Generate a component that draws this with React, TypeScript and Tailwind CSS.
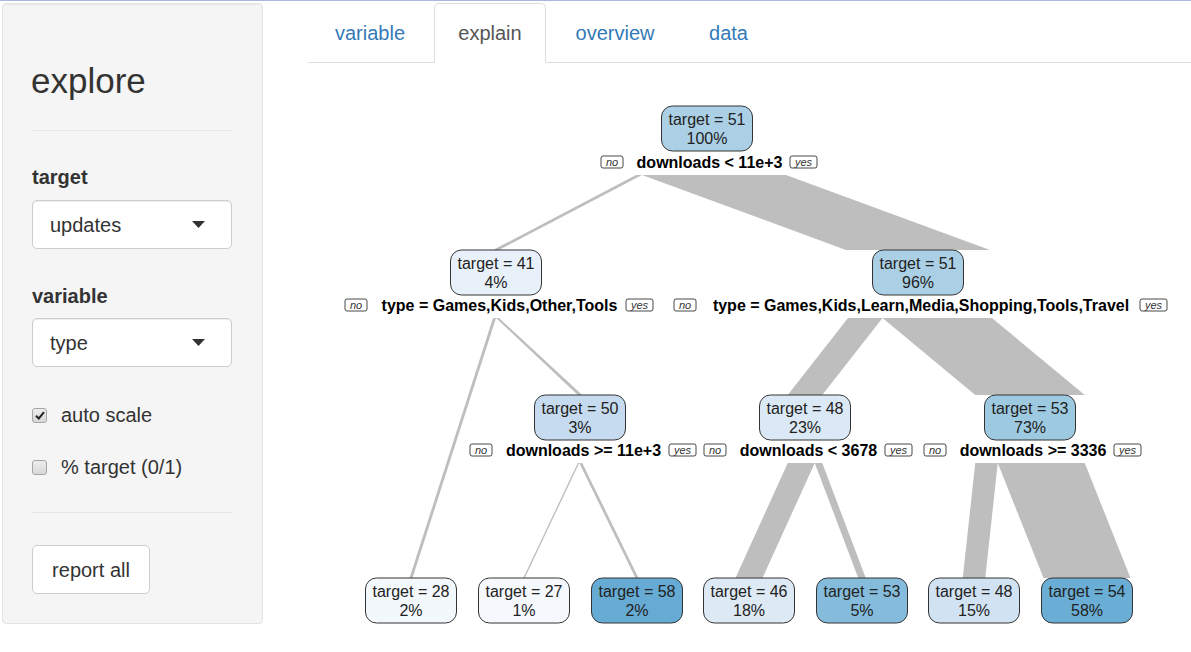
import React from 'react';

type Node = { cx: number; y: number; target: number; pct: string; fill: string };
type Split = { cx: number; hw: number; y: number; label: string };

const nodes: Node[] = [
  { cx: 707, y: 106, target: 51, pct: '100%', fill: '#abd0e6' },
  { cx: 496, y: 250, target: 41, pct: '4%', fill: '#e8f1fa' },
  { cx: 918, y: 250, target: 51, pct: '96%', fill: '#abd0e6' },
  { cx: 580, y: 395, target: 50, pct: '3%', fill: '#c6dbef' },
  { cx: 805, y: 395, target: 48, pct: '23%', fill: '#dbe9f6' },
  { cx: 1030, y: 395, target: 53, pct: '73%', fill: '#9ecae1' },
  { cx: 411, y: 578, target: 28, pct: '2%', fill: '#f3f8fd' },
  { cx: 524, y: 578, target: 27, pct: '1%', fill: '#f5f9fe' },
  { cx: 637, y: 578, target: 58, pct: '2%', fill: '#66abd4' },
  { cx: 749, y: 578, target: 46, pct: '18%', fill: '#dde9f5' },
  { cx: 862, y: 578, target: 53, pct: '5%', fill: '#85bcdc' },
  { cx: 974, y: 578, target: 48, pct: '15%', fill: '#d1e3f3' },
  { cx: 1087, y: 578, target: 54, pct: '58%', fill: '#6aaed6' },
];

const splits: Split[] = [
  { cx: 709.5, hw: 73.5, y: 162, label: 'downloads < 11e+3' },
  { cx: 499.5, hw: 119.5, y: 305, label: 'type = Games,Kids,Other,Tools' },
  { cx: 921, hw: 212, y: 305, label: 'type = Games,Kids,Learn,Media,Shopping,Tools,Travel' },
  { cx: 583.5, hw: 78.5, y: 450, label: 'downloads >= 11e+3' },
  { cx: 808.5, hw: 69.5, y: 450, label: 'downloads < 3678' },
  { cx: 1033, hw: 74, y: 450, label: 'downloads >= 3336' },
];

// [topLeft, topRight, y1, bottomLeft, bottomRight, y2]
const branches: number[][] = [
  [636, 642, 175, 493, 499, 250],
  [642, 786, 175, 846, 990, 250],
  [493, 496, 318, 409.5, 412.5, 578],
  [496, 499, 318, 577.75, 582.25, 395],
  [848, 882.5, 318, 787.75, 822.25, 395],
  [882.5, 992, 318, 975.25, 1084.75, 395],
  [577.75, 579.25, 463, 523.25, 524.75, 578],
  [579.25, 582.25, 463, 635.5, 638.5, 578],
  [787.75, 814.75, 463, 735.5, 762.5, 578],
  [814.75, 822.25, 463, 858.25, 865.75, 578],
  [975.25, 997.75, 463, 962.75, 985.25, 578],
  [997.75, 1084.75, 463, 1043.5, 1130.5, 578],
];

function Tag({ x, y, w, text }: { x: number; y: number; w: number; text: string }) {
  return (
    <g>
      <rect x={x} y={y - 6} width={w} height={12} rx={2} fill="#fff" stroke="#333" strokeWidth={0.9} />
      <text x={x + w / 2} y={y + 3.5} textAnchor="middle" fontSize={11} fontStyle="italic" fill="#333">
        {text}
      </text>
    </g>
  );
}

function Tree() {
  return (
    <svg width={883} height={589} className="block">
      <g transform="translate(-308,-63)" fontFamily="'Liberation Sans', Arial, sans-serif">
        {branches.map((b, i) => (
          <polygon
            key={i}
            points={`${b[0]},${b[2]} ${b[1]},${b[2]} ${b[4]},${b[5]} ${b[3]},${b[5]}`}
            fill="#bebebe"
          />
        ))}
        {nodes.map((n, i) => (
          <g key={i}>
            <rect x={n.cx - 45.5} y={n.y} width={91} height={45} rx={11} fill={n.fill} stroke="#333" strokeWidth={1} />
            <text x={n.cx} y={n.y + 18.5} textAnchor="middle" fontSize={16} fill="#222">
              target = {n.target}
            </text>
            <text x={n.cx} y={n.y + 37.5} textAnchor="middle" fontSize={16} fill="#222">
              {n.pct}
            </text>
          </g>
        ))}
        {splits.map((s, i) => (
          <g key={i}>
            <Tag x={s.cx - s.hw - 13 - 22} y={s.y} w={22} text="no" />
            <text x={s.cx} y={s.y + 6} textAnchor="middle" fontSize={16} fontWeight="bold" fill="#000">
              {s.label}
            </text>
            <Tag x={s.cx + s.hw + 7} y={s.y} w={27} text="yes" />
          </g>
        ))}
      </g>
    </svg>
  );
}

function Caret() {
  return (
    <svg width={13} height={7} viewBox="0 0 13 7">
      <path d="M0 0 L13 0 L6.5 7 Z" fill="#333" />
    </svg>
  );
}

function Select({ value }: { value: string }) {
  return (
    <div className="flex h-[49px] w-[200px] items-center justify-between rounded-[5px] border border-[#ccc] bg-white pl-[17px] pr-[26px] text-[20px] text-[#333] shadow-[inset_0_1px_1px_rgba(0,0,0,0.075)]">
      <span>{value}</span>
      <Caret />
    </div>
  );
}

function Check({ checked, label, className }: { checked: boolean; label: string; className: string }) {
  return (
    <div className={`flex h-[28px] items-center text-[20px] text-[#333] ${className}`}>
      <span className="flex h-[15px] w-[15px] items-center justify-center rounded-[3px] border border-[#a6a6a6] bg-gradient-to-b from-[#ededed] to-[#d8d8d8]">
        {checked && (
          <svg width={10} height={9} viewBox="0 0 10 9">
            <path d="M1 4.8 L3.8 7.5 L9 1.2" fill="none" stroke="#222" strokeWidth={2} />
          </svg>
        )}
      </span>
      <span className="ml-[14px]">{label}</span>
    </div>
  );
}

const tabs = [
  { label: 'variable', w: 'w-[124px]' },
  { label: 'explain', w: 'w-[112px]', active: true },
  { label: 'overview', w: 'w-[134px]' },
  { label: 'data', w: 'w-[89px]' },
];

export default function App() {
  return (
    <div className="h-[652px] w-[1191px] overflow-hidden border-t border-[#a9b7df] bg-white font-['Liberation_Sans',Arial,sans-serif]">
      <div className="flex pt-[2px]">
        <aside className="ml-[2px] h-[621px] w-[261px] shrink-0 rounded-[4px] border border-[#e3e3e3] bg-[#f5f5f5] pl-[29px] pr-[30px] pt-[57px] shadow-[inset_0_1px_1px_rgba(0,0,0,0.05)]">
          <h1 className="-ml-px text-[35px] leading-[39px] text-[#333]">explore</h1>
          <div className="mt-[30px] h-px bg-[#e6e6e6]" />
          <div className="mt-[32px] text-[20px] font-bold leading-[28px] text-[#333]">target</div>
          <div className="mt-[9px]">
            <Select value="updates" />
          </div>
          <div className="mt-[33px] text-[20px] font-bold leading-[28px] text-[#333]">variable</div>
          <div className="mt-[8px]">
            <Select value="type" />
          </div>
          <Check checked label="auto scale" className="mt-[34px]" />
          <Check checked={false} label="% target (0/1)" className="mt-[24px]" />
          <div className="mt-[31px] h-px bg-[#e6e6e6]" />
          <button className="mt-[32px] flex h-[49px] w-[118px] items-center justify-center rounded-[5px] border border-[#ccc] bg-white text-[20px] text-[#333]">
            report all
          </button>
        </aside>
        <main className="ml-[45px] flex-1">
          <ul className="flex h-[60px] border-b border-[#ddd]">
            {tabs.map((t) => (
              <li
                key={t.label}
                className={`-mb-px mr-[2px] flex h-[60px] items-center justify-center rounded-t-[5px] border text-[20px] ${t.w} ${
                  t.active
                    ? 'border-[#ddd] border-b-white bg-white text-[#555]'
                    : 'border-transparent text-[#337ab7]'
                }`}
              >
                {t.label}
              </li>
            ))}
          </ul>
          <Tree />
        </main>
      </div>
    </div>
  );
}
